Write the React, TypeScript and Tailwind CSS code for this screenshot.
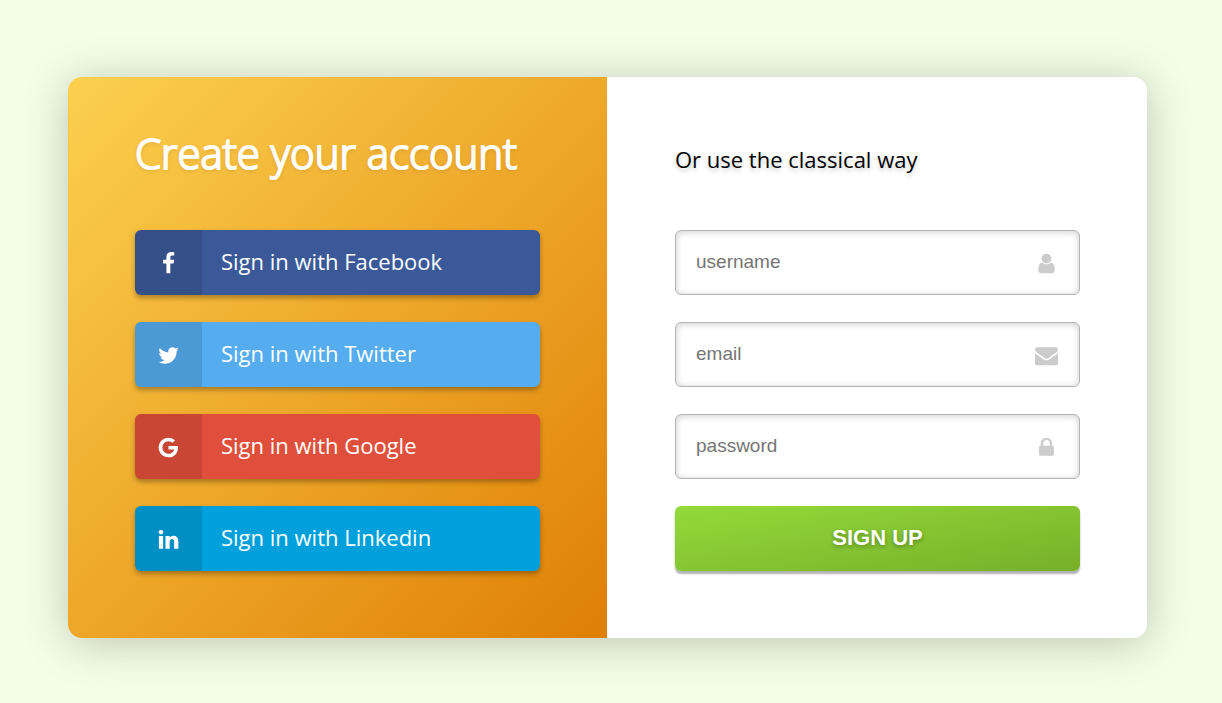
import React from 'react';

const icons = {
  facebook:
    'M1343 12v264h-157q-86 0-116 36t-30 108v189h293l-39 296h-254v759h-306v-759h-255v-296h255v-218q0-186 104-288.5t277-102.5q147 0 228 12z',
  twitter:
    'M1684 408q-67 98-162 167 1 14 1 42 0 130-38 259.5t-115.5 248.5-184.5 210.5-258 146-323 54.5q-271 0-496-145 35 4 78 4 225 0 401-138-105-2-188-64.5t-114-159.5q33 5 61 5 43 0 85-11-112-23-185.5-111.5t-73.5-205.5v-4q68 38 146 41-66-44-105-115t-39-154q0-88 44-163 121 149 294.5 238.5t371.5 99.5q-8-38-8-74 0-134 94.5-228.5t228.5-94.5q140 0 236 102 109-21 205-78-37 115-142 178 93-10 186-50z',
  google:
    'M896 786h725q12 67 12 128 0 217-91 387.5t-259.5 266.5-386.5 96q-157 0-299-60.5t-245-163.5-163.5-245-60.5-299 60.5-299 163.5-245 245-163.5 299-60.5q300 0 515 201l-209 201q-123-119-306-119-129 0-238.5 65t-173.5 176.5-64 243.5 64 243.5 173.5 176.5 238.5 65q87 0 160-24t120-60 82-82 51.5-87 22.5-78h-436v-264z',
  linkedin:
    'M477 625v991h-330v-991h330zm21-306q1 73-50.5 122t-135.5 49h-2q-82 0-132-49t-50-122q0-74 51.5-122.5t134.5-48.5 133 48.5 51 122.5zm1166 729v568h-329v-530q0-105-40.5-164.5t-126.5-59.5q-63 0-105.5 34.5t-63.5 85.5q-11 30-11 81v553h-329q2-399 2-647t-1-296l-1-48h329v144h-2q20-32 41-56t56.5-52 87-43.5 114.5-15.5q171 0 275 113.5t104 332.5z',
  user: 'M1536 1399q0 109-62.5 187t-150.5 78h-854q-88 0-150.5-78t-62.5-187q0-85 8.5-160.5t31.5-152 58.5-131 94-89 134.5-34.5q131 128 313 128t313-128q76 0 134.5 34.5t94 89 58.5 131 31.5 152 8.5 160.5zm-256-887q0 159-112.5 271.5t-271.5 112.5-271.5-112.5-112.5-271.5 112.5-271.5 271.5-112.5 271.5 112.5 112.5 271.5z',
  envelope:
    'M1792 710v794q0 66-47 113t-113 47h-1472q-66 0-113-47t-47-113v-794q44 49 101 87 362 246 497 345 57 42 92.5 65.5t94.5 48 110 24.5h2q51 0 110-24.5t94.5-48 92.5-65.5q170-123 498-345 57-39 100-87zm0-294q0 79-49 151t-122 123q-376 261-468 325-10 7-42.5 31t-54 38.5-52 32.5-57.5 27-50 9h-2q-23 0-50-9t-57.5-27-52-32.5-54-38.5-42.5-31q-91-64-262-182.5t-205-142.5q-62-42-117-115.5t-55-136.5q0-78 41.5-130t118.5-52h1472q65 0 112.5 47t47.5 113z',
  lock: 'M640 768h512v-192q0-106-75-181t-181-75-181 75-75 181v192zm832 96v576q0 40-28 68t-68 28h-960q-40 0-68-28t-28-68v-576q0-40 28-68t68-28h32v-192q0-184 132-316t316-132 316 132 132 316v192h32q40 0 68 28t28 68z',
};

function Icon({ name, className }: { name: keyof typeof icons; className: string }) {
  return (
    <svg viewBox="0 0 1792 1792" fill="currentColor" aria-hidden="true" className={className}>
      <path d={icons[name]} />
    </svg>
  );
}

const providers = [
  { icon: 'facebook', label: 'Facebook', color: 'bg-[#3b5998]' },
  { icon: 'twitter', label: 'Twitter', color: 'bg-[#55acee]' },
  { icon: 'google', label: 'Google', color: 'bg-[#e04f3b]' },
  { icon: 'linkedin', label: 'Linkedin', color: 'bg-[#00a0dc]' },
] as const;

const fields = [
  { id: 'username', type: 'text', icon: 'user' },
  { id: 'email', type: 'email', icon: 'envelope' },
  { id: 'password', type: 'password', icon: 'lock' },
] as const;

export default function App() {
  return (
    <main className="min-h-screen bg-[#f4fde7] pt-[77px] pr-[75px] pb-16 pl-[68px] font-['Open_Sans',sans-serif]">
      <div className="mx-auto grid max-w-[1080px] grid-cols-[539fr_540fr] overflow-hidden rounded-[14px] bg-white shadow-[0_5px_45px_rgba(0,0,0,0.22)]">
        <section className="bg-linear-[135deg,#fcd04f,#df7f05] px-[67px] pt-[44px] pb-[67px]">
          <h1 className="mb-[45px] text-[42px] leading-[64px] font-light whitespace-nowrap text-white [-webkit-text-stroke:2px_white] [text-shadow:0_2px_4px_rgba(0,0,0,0.15)]">
            Create your account
          </h1>
          <div className="flex flex-col gap-[27px]">
            {providers.map((p) => (
              <button
                key={p.label}
                type="button"
                className={`flex h-[65px] cursor-pointer overflow-hidden rounded-md text-left text-[22px] text-white shadow-[0_3px_5px_rgba(0,0,0,0.3)] ${p.color}`}
              >
                <span className="flex h-full w-[67px] items-center justify-center bg-black/10 pt-[2px]">
                  <Icon name={p.icon} className="size-[23px]" />
                </span>
                <span className="pl-[19px] leading-[62px]">Sign in with {p.label}</span>
              </button>
            ))}
          </div>
        </section>
        <form className="px-[67px] pt-[50px] pb-[67px]" onSubmit={(e) => e.preventDefault()}>
          <h2 className="mb-[39px] pl-px text-[22px] leading-[64px] text-black [text-shadow:0_3px_4px_rgba(0,0,0,0.2)]">
            Or use the classical way
          </h2>
          <div className="flex flex-col gap-[27px] pl-px">
            {fields.map((f) => (
              <label
                key={f.id}
                htmlFor={f.id}
                className="flex h-[65px] items-center rounded-md border border-[#b4b4b4] pr-[21px] pl-[20px] shadow-[inset_0_1px_7px_rgba(0,0,0,0.2)]"
              >
                <input
                  id={f.id}
                  type={f.type}
                  placeholder={f.id}
                  aria-label={f.id}
                  className="h-full min-w-0 flex-1 bg-transparent pb-[2px] font-['Liberation_Sans',sans-serif] text-[19px] text-black outline-none placeholder:text-[#757575]"
                />
                <span className="pt-[2px]">
                  <Icon name={f.icon} className="size-[23px] text-[#cccccc]" />
                </span>
              </label>
            ))}
            <button
              type="submit"
              className="h-[65px] cursor-pointer rounded-md bg-linear-[170deg,#94da3b,#76b028] pb-[2px] font-['Liberation_Sans',sans-serif] text-[22px] font-bold text-white shadow-[0_3px_2px_rgba(0,0,0,0.3)] [text-shadow:0_2px_4px_rgba(0,0,0,0.3)]"
            >
              SIGN UP
            </button>
          </div>
        </form>
      </div>
    </main>
  );
}
